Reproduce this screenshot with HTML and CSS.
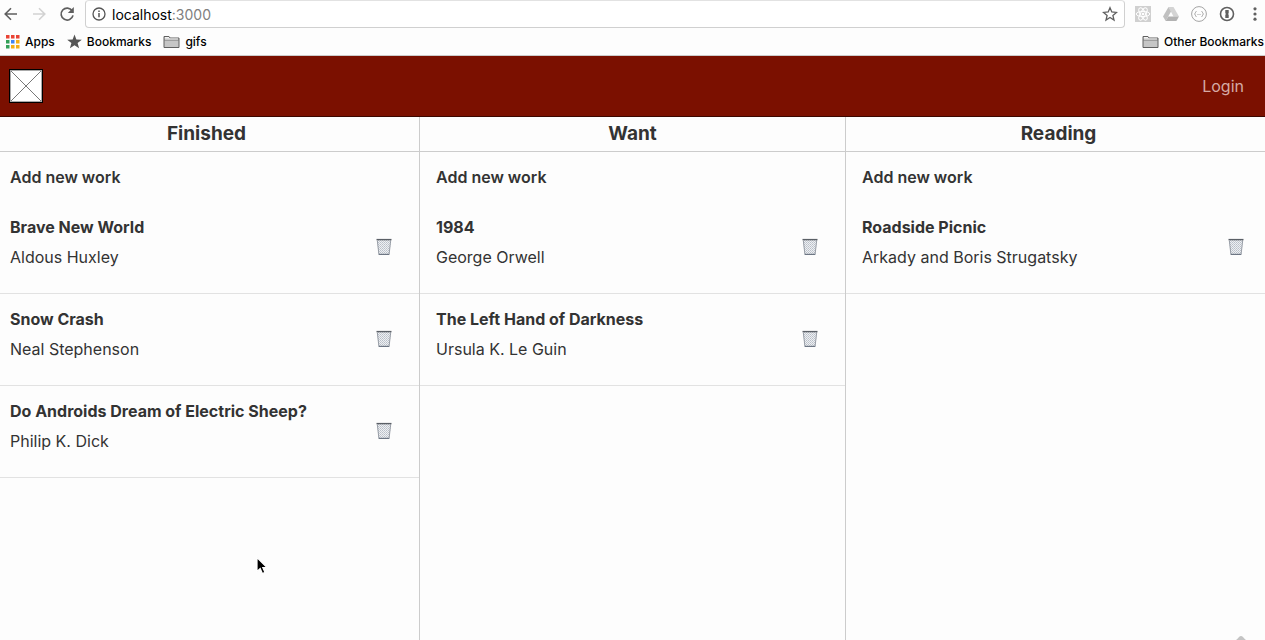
FILE: index.html
```html
<!DOCTYPE html>
<html lang="en">
<head>
<meta charset="utf-8">
<title>Reading list</title>
<link rel="stylesheet" href="styles.css">
</head>
<body>
<svg class="sprites" width="0" height="0" aria-hidden="true">
  <defs>
    <pattern id="mesh" width="2" height="2" patternUnits="userSpaceOnUse">
      <rect width="2" height="2" fill="#eef0f3"/><rect width="1" height="1" fill="#b9bfc8"/><rect x="1" y="1" width="1" height="1" fill="#c6cbd2"/>
    </pattern>
    <symbol id="trash" viewBox="0 0 16 18">
      <path d="M1 2h14l-1.700 14.500H2.700z" fill="url(#mesh)"/>
      <path d="M1.300 2.500l1.600 13.800M14.700 2.500l-1.600 13.800" stroke="#858b95" stroke-width=".8"/>
      <path d="M.5 1.600h15" stroke="#5a5f66" stroke-width="1.400"/>
      <path d="M2.700 16.400h10.600" stroke="#6d7684" stroke-width="1.200"/>
    </symbol>
    <symbol id="folder" viewBox="0 0 17 14">
      <path d="M1 12.500V1.500h5l1 1.500h9v9.500z" fill="#c6c6c6" stroke="#606060"/>
      <path d="M1 5h15" stroke="#777"/><path d="M2 2.500h4M2 4h13" stroke="#f2f2f2"/>
    </symbol>
  </defs>
</svg>

<header class="browser">
  <div class="toolbar">
    <button class="tool" aria-label="Back"><svg width="16" height="16" viewBox="0 0 16 16"><path d="M14 8H2.500M8 2.200L2.200 8 8 13.800" fill="none" stroke="#5f5f5f" stroke-width="1.600"/></svg></button>
    <button class="tool" aria-label="Forward"><svg width="16" height="16" viewBox="0 0 16 16"><path d="M2 8h11.500M8 2.200L13.800 8 8 13.800" fill="none" stroke="#d2d2d2" stroke-width="1.600"/></svg></button>
    <button class="tool" aria-label="Reload"><svg width="16" height="16" viewBox="0 0 16 16"><path d="M13.200 4.800A6 6 0 1 0 14 9.400" fill="none" stroke="#5f5f5f" stroke-width="1.700"/><path d="M14.800 1v6H8.800z" fill="#5f5f5f"/></svg></button>
    <div class="address">
      <svg width="14" height="14" viewBox="0 0 14 14"><circle cx="7" cy="7" r="6" fill="none" stroke="#555" stroke-width="1.300"/><path d="M7 6v4.200M7 3.400v1.500" stroke="#555" stroke-width="1.500"/></svg>
      <span class="url">localhost<span class="port">:3000</span></span>
      <button class="tool" aria-label="Bookmark this page"><svg width="16" height="16" viewBox="0 0 16 16"><path d="M8 1.700l1.800 4.300 4.700.4-3.600 3 1.100 4.600-4-2.500L4 14l1.100-4.600-3.600-3L6.200 6z" fill="none" stroke="#5f5f5f" stroke-width="1.300"/></svg></button>
    </div>
    <div class="extensions">
      <button class="tool" aria-label="React"><svg width="16" height="16" viewBox="0 0 16 16"><rect width="16" height="16" fill="#d0d0d0"/><g fill="none" stroke="#fff" stroke-width="1"><ellipse cx="8" cy="8" rx="6.800" ry="2.600"/><ellipse cx="8" cy="8" rx="6.800" ry="2.600" transform="rotate(60 8 8)"/><ellipse cx="8" cy="8" rx="6.800" ry="2.600" transform="rotate(120 8 8)"/></g><circle cx="8" cy="8" r="1.300" fill="#fff"/></svg></button>
      <button class="tool" aria-label="Drive"><svg width="16" height="16" viewBox="0 0 16 16"><path d="M5.500 1h5L16 10.500H10.500z" fill="#d4d4d4"/><path d="M5.500 1L0 10.500 2.700 15 8 5.500z" fill="#c0c0c0"/><path d="M5.300 10.500H16L13.400 15H2.700z" fill="#b2b2b2"/></svg></button>
      <button class="tool" aria-label="JSON viewer"><svg width="16" height="16" viewBox="0 0 16 16"><circle cx="8" cy="8" r="7.400" fill="none" stroke="#a4a4a4"/><path d="M5.500 5.500q-1 0-1 1T3.500 8q1 .4 1 1.500t1 1M10.500 5.500q1 0 1 1t1 1.500q-1 .4-1 1.500t-1 1M6.500 8.500h1M8.500 8.500h1" fill="none" stroke="#999" stroke-width=".9"/></svg></button>
      <button class="tool" aria-label="Password manager"><svg width="16" height="16" viewBox="0 0 16 16"><circle cx="8" cy="8" r="6.500" fill="#fff" stroke="#606060" stroke-width="1.600"/><path d="M6.300 4h3.400v3.300L9 8l.7.700V12H6.300V8.700L7 8l-.7-.7z" fill="#606060"/></svg></button>
      <button class="tool" aria-label="Menu"><svg width="16" height="16" viewBox="0 0 16 16" fill="#606060"><circle cx="8" cy="2.800" r="1.600"/><circle cx="8" cy="8" r="1.600"/><circle cx="8" cy="13.200" r="1.600"/></svg></button>
    </div>
  </div>
  <nav class="bookmarks">
    <a class="bookmark" href="#"><svg width="14" height="14" viewBox="0 0 14 14"><path d="M0 0h3.500v3.500H0zM5 0h3.500v3.500H5zM10 0h3.500v3.500H10z" fill="#ea4335"/><path d="M0 5h3.500v3.500H0zM0 10h3.500v3.500H0z" fill="#34a058"/><path d="M5 5h3.500v3.500H5z" fill="#4285f4"/><path d="M10 5h3.500v3.500H10zM5 10h3.500v3.500H5zM10 10h3.500v3.500H10z" fill="#f5ad15"/></svg>Apps</a>
    <a class="bookmark" href="#"><svg width="15" height="15" viewBox="0 0 16 16"><path d="M8 .5l2 5.300 5.800.3-4.500 3.500 1.600 5.600L8 12l-4.900 3.200 1.600-5.600L.2 6.100 6 5.800z" fill="#555"/></svg>Bookmarks</a>
    <a class="bookmark" href="#"><svg width="17" height="14"><use href="#folder"/></svg>gifs</a>
    <a class="bookmark other" href="#"><svg width="17" height="14"><use href="#folder"/></svg>Other Bookmarks</a>
  </nav>
</header>

<header class="navbar">
  <a class="brand" href="#" aria-label="Home"><svg width="34" height="34" viewBox="0 0 34 34"><rect x=".5" y=".5" width="33" height="33" fill="#fff" stroke="#000"/><rect x="1.500" y="1.500" width="31" height="31" fill="none" stroke="#aaa"/><path d="M2 2l30 30M32 2L2 32" stroke="#555" stroke-width=".8"/></svg></a>
  <a class="login" href="#">Login</a>
</header>

<main class="viewport">
  <div class="board">
    <section class="column">
      <h2 class="heading">Finished</h2>
      <button class="add">Add new work</button>
      <article class="work"><div><h3 class="title">Brave New World</h3><p class="author">Aldous Huxley</p></div><button class="remove" aria-label="Remove"><svg width="16" height="18"><use href="#trash"/></svg></button></article>
      <article class="work"><div><h3 class="title">Snow Crash</h3><p class="author">Neal Stephenson</p></div><button class="remove" aria-label="Remove"><svg width="16" height="18"><use href="#trash"/></svg></button></article>
      <article class="work"><div><h3 class="title">Do Androids Dream of Electric Sheep?</h3><p class="author">Philip K. Dick</p></div><button class="remove" aria-label="Remove"><svg width="16" height="18"><use href="#trash"/></svg></button></article>
    </section>
    <section class="column">
      <h2 class="heading">Want</h2>
      <button class="add">Add new work</button>
      <article class="work"><div><h3 class="title">1984</h3><p class="author">George Orwell</p></div><button class="remove" aria-label="Remove"><svg width="16" height="18"><use href="#trash"/></svg></button></article>
      <article class="work"><div><h3 class="title">The Left Hand of Darkness</h3><p class="author">Ursula K. Le Guin</p></div><button class="remove" aria-label="Remove"><svg width="16" height="18"><use href="#trash"/></svg></button></article>
    </section>
    <section class="column">
      <h2 class="heading">Reading</h2>
      <button class="add">Add new work</button>
      <article class="work"><div><h3 class="title">Roadside Picnic</h3><p class="author">Arkady and Boris Strugatsky</p></div><button class="remove" aria-label="Remove"><svg width="16" height="18"><use href="#trash"/></svg></button></article>
    </section>
  </div>
  <svg class="corner" width="12" height="5" viewBox="0 0 12 5"><path d="M1 5q2-1.500 3-3 2-2 4 0 1 1.500 3 3z" fill="#c4c4c4"/></svg>
</main>
<svg class="pointer" width="14" height="20" viewBox="0 0 14 20"><path d="M2 1.500v14l3.200-3 2.200 5 2.600-1.100-2.200-4.900H12z" fill="#000" stroke="#fff" stroke-width="1.200"/></svg>
</body>
</html>
```
FILE: styles.css
```css
* { box-sizing: border-box; }

body {
  display: flex;
  flex-direction: column;
  min-height: 100vh;
  margin: 0;
  background: #fdfdfd;
  color: #333;
  font-family: Inter, "Liberation Sans", sans-serif;
  font-size: 16px;
}

a { color: inherit; text-decoration: none; }
button { padding: 0; border: 0; background: none; color: inherit; font: inherit; cursor: pointer; }
svg { display: block; flex: none; }
.sprites { position: absolute; }

.browser { border-bottom: 1px solid #ccc; color: #000; }
.toolbar { display: flex; align-items: center; height: 28px; padding: 0 2px 0 3px; }
.toolbar > .tool { width: 28px; }
.address {
  display: flex;
  flex: 1;
  align-items: center;
  gap: 6px;
  height: 28px;
  margin-right: 10px;
  padding: 0 6px;
  border: 1px solid #d0d0d0;
  border-top-color: #e2e2e2;
  border-radius: 4px;
  background: #fff;
  font-size: 14px;
}
.url { flex: 1; }
.port { color: #808080; }
.toolbar > .tool:nth-child(3) { width: 26px; }
.extensions { display: flex; gap: 12px; }

.bookmarks { display: flex; align-items: center; gap: 12px; height: 27px; padding: 0 1px 0 6px; font-size: 12px; font-weight: 500; }
.bookmark { display: flex; align-items: center; gap: 5px; }
.other { margin-left: auto; }

.navbar {
  display: flex;
  align-items: center;
  justify-content: space-between;
  height: 61px;
  padding: 0 21px 0 9px;
  border-bottom: 1px solid #3c0700;
  background: #7b1000;
}
.login { color: #d5aaa5; }

.viewport { position: relative; display: flex; flex: 1; overflow: hidden; }
.board { display: grid; flex: 1; grid-template-columns: repeat(3, 1fr); margin: 0 -6px 0 -7px; }
.column { border-left: 1px solid #ccc; }
.heading {
  margin: 0;
  border-bottom: 1px solid #ccc;
  font-size: 19px;
  font-weight: 700;
  line-height: 34px;
  text-align: center;
}
.add { display: block; height: 50px; padding: 0 16px; font-weight: 600; }
.work {
  display: flex;
  align-items: center;
  justify-content: space-between;
  height: 92px;
  padding: 0 27px 0 16px;
  border-bottom: 1px solid #e2e2e2;
}
.title, .author { margin: 0; font-size: 16px; line-height: 30px; }
.title { font-weight: 700; }
.author { font-weight: 400; }
.work > div { padding-bottom: 11px; }
.remove { padding-bottom: 2px; }

.corner { position: absolute; right: 18px; bottom: 0; }
.pointer { position: absolute; left: 255px; top: 556px; }
```
